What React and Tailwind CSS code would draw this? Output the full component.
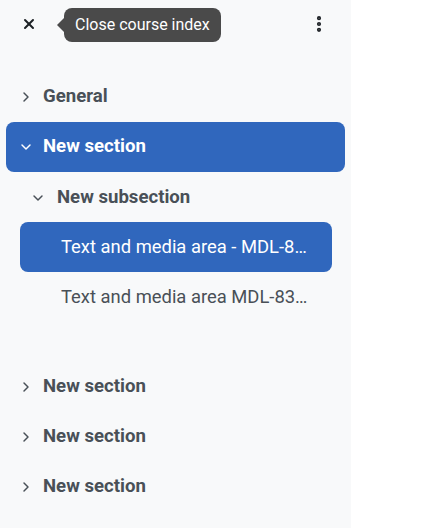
import { X, ChevronRight, ChevronDown, EllipsisVertical } from "lucide-react";

function SectionRow({ title, open, active }) {
    return (
        <div
            className={`mx-[6px] flex h-[50px] items-center rounded-lg pl-[12px] ${
                active ? "bg-[#3067bd] text-white" : "text-[#495057]"
            }`}
        >
            <span className="flex w-[25px] items-center">
                {open ? (
                    <ChevronDown size={16} strokeWidth={2.2} />
                ) : (
                    <ChevronRight size={16} strokeWidth={2.2} />
                )}
            </span>
            <span className="text-[18.6px] font-bold">{title}</span>
        </div>
    );
}

function ItemRow({ title, active }) {
    return (
        <div
            className={`ml-[20px] mr-[19px] flex h-[50px] items-center rounded-lg pl-[41px] pr-[20px] ${
                active ? "bg-[#3067bd] text-white" : "text-[#495057]"
            }`}
        >
            <span className="min-w-0 truncate text-[18.4px]">{title}</span>
        </div>
    );
}

export default function App() {
    return (
        <div className="flex h-[528px] w-[426px] bg-white font-['Roboto',sans-serif]">
            <div className="relative w-[351px] bg-[#f8f9fa]">
                <header className="flex h-[48px] items-center justify-between pl-[21px] pr-[22px]">
                    <X size={16} strokeWidth={3} className="text-[#1d2125]" />
                    <EllipsisVertical size={20} strokeWidth={3} className="text-[#1d2125]" />
                </header>

                <div className="absolute left-[57px] top-[8px] flex items-center">
                    <span className="h-0 w-0 border-y-[7px] border-r-[7px] border-y-transparent border-r-[#4a4a4a]" />
                    <div className="flex h-[34px] items-center rounded-lg bg-[#4a4a4a] px-[11px] text-[16px] text-white">
                        Close course index
                    </div>
                </div>

                <nav className="mt-[24px]">
                    <SectionRow title="General" />
                    <SectionRow title="New section" open active />
                    <div className="flex h-[50px] items-center pl-[30px] pt-[2px] text-[#495057]">
                        <span className="flex w-[27px] items-center">
                            <ChevronDown size={16} strokeWidth={2.2} />
                        </span>
                        <span className="text-[18.6px] font-bold">New subsection</span>
                    </div>
                    <ItemRow title="Text and media area - MDL-83451" active />
                    <ItemRow title="Text and media area MDL-83451 second" />
                    <div className="mt-[40px]">
                        <SectionRow title="New section" />
                        <SectionRow title="New section" />
                        <SectionRow title="New section" />
                    </div>
                </nav>
            </div>
        </div>
    );
}
